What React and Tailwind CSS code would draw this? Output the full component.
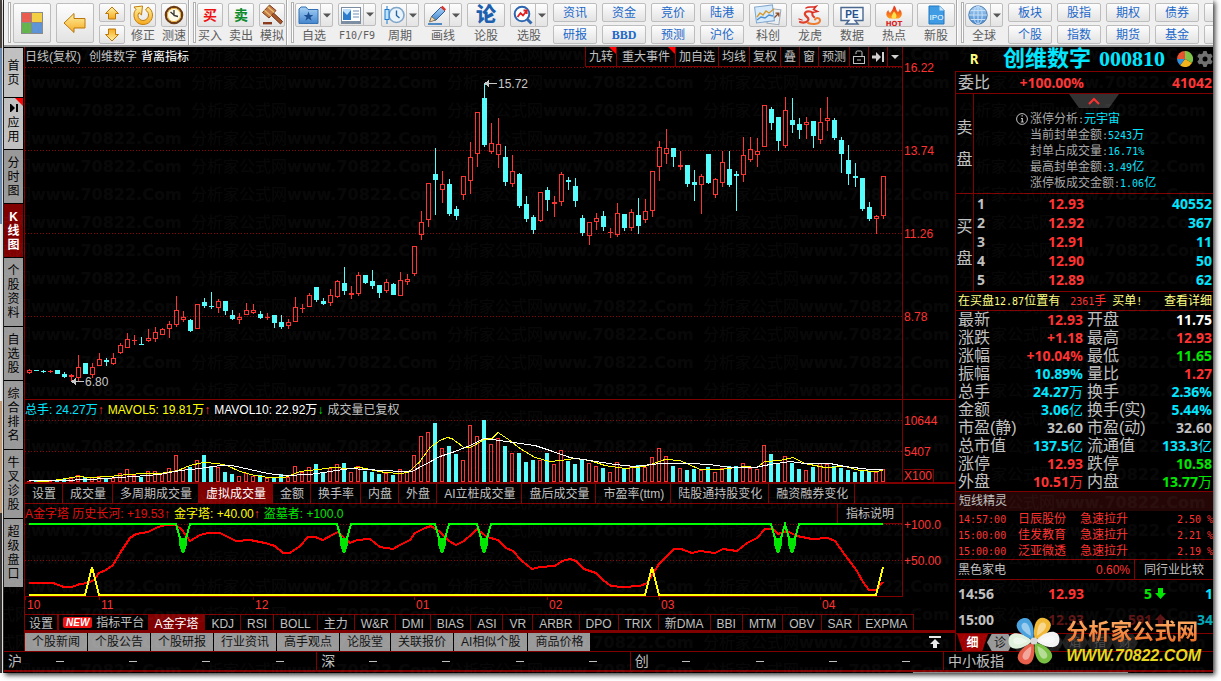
import React, { useState } from "react";
import clsx from "clsx";
import { FaGear } from "react-icons/fa6";

// [up, high, bodyTop, bodyBottom, low, volume]
const CANDLES = [
  [1, 369, 370, 373, 374, 1], [0, 370, 370, 371, 371, 1], [0, 370, 371, 372, 373, 2], [1, 370, 371, 372, 373, 1],
  [0, 370, 370, 374, 374, 1], [0, 372, 374, 377, 378, 3], [1, 374, 375, 377, 382, 4], [1, 355, 367, 378, 381, 7],
  [0, 363, 363, 374, 374, 5], [1, 363, 367, 375, 378, 5], [1, 353, 359, 366, 366, 6], [0, 358, 360, 362, 366, 3],
  [1, 353, 358, 364, 365, 4], [1, 343, 345, 353, 354, 9], [1, 333, 339, 348, 348, 13], [1, 335, 340, 341, 345, 7],
  [0, 337, 344, 345, 345, 5], [1, 329, 338, 341, 342, 11], [1, 327, 332, 339, 342, 11], [1, 328, 329, 335, 335, 9],
  [1, 321, 324, 329, 338, 14], [1, 296, 310, 325, 327, 27], [1, 311, 317, 320, 322, 14], [0, 319, 320, 331, 332, 15],
  [1, 304, 304, 329, 329, 22], [0, 298, 302, 306, 308, 27], [0, 292, 306, 307, 309, 16], [1, 299, 301, 308, 313, 15],
  [0, 301, 301, 311, 315, 10], [0, 310, 315, 319, 320, 8], [1, 313, 317, 320, 324, 6], [1, 303, 310, 315, 315, 9],
  [1, 304, 310, 313, 314, 6], [0, 311, 314, 318, 319, 7], [1, 313, 317, 318, 320, 4], [0, 315, 315, 323, 328, 5],
  [0, 315, 322, 327, 329, 8], [1, 319, 322, 326, 329, 5], [1, 297, 307, 322, 322, 16], [1, 304, 308, 309, 313, 10],
  [1, 293, 295, 307, 307, 15], [0, 287, 287, 300, 302, 18], [0, 298, 301, 304, 305, 10], [1, 289, 295, 303, 306, 14],
  [1, 280, 281, 297, 298, 18], [0, 267, 283, 291, 295, 19], [1, 286, 293, 295, 299, 10], [1, 272, 275, 294, 296, 16],
  [0, 275, 275, 283, 284, 11], [0, 270, 281, 286, 289, 10], [0, 285, 285, 293, 298, 8], [1, 279, 282, 291, 293, 9],
  [0, 283, 284, 295, 295, 7], [1, 272, 280, 296, 296, 13], [1, 274, 279, 282, 285, 10], [1, 246, 246, 274, 276, 27],
  [1, 211, 222, 235, 240, 46], [1, 183, 183, 220, 227, 50], [0, 148, 174, 180, 215, 59], [1, 171, 184, 190, 203, 34],
  [0, 179, 184, 214, 216, 36], [0, 206, 209, 216, 220, 28], [1, 176, 176, 195, 200, 22], [1, 142, 157, 181, 194, 57],
  [1, 112, 112, 154, 167, 46], [0, 83, 98, 145, 147, 62], [1, 123, 143, 152, 154, 38], [1, 118, 144, 155, 168, 44],
  [0, 146, 157, 182, 186, 36], [1, 155, 171, 184, 187, 29], [0, 173, 174, 206, 208, 29], [0, 196, 204, 219, 222, 20],
  [0, 215, 217, 230, 234, 22], [1, 192, 192, 221, 222, 22], [0, 187, 190, 200, 211, 29], [1, 196, 202, 204, 217, 18],
  [1, 172, 174, 202, 206, 32], [0, 177, 180, 182, 190, 21], [0, 178, 186, 201, 207, 18], [0, 215, 218, 233, 236, 23],
  [1, 222, 222, 236, 245, 19], [1, 213, 218, 222, 230, 16], [0, 211, 216, 227, 231, 14], [1, 228, 232, 233, 238, 10],
  [1, 203, 213, 235, 237, 20], [0, 214, 214, 228, 231, 13], [1, 209, 212, 228, 231, 16], [0, 198, 215, 226, 234, 17],
  [1, 199, 211, 220, 223, 15], [1, 171, 171, 211, 217, 25], [1, 141, 147, 167, 181, 34], [1, 129, 148, 154, 164, 26],
  [0, 148, 148, 157, 167, 16], [1, 151, 165, 167, 170, 14], [0, 165, 165, 184, 187, 12], [0, 170, 182, 185, 201, 13],
  [1, 174, 176, 185, 214, 12], [0, 154, 154, 183, 184, 15], [1, 178, 179, 195, 198, 10], [1, 151, 162, 183, 187, 14],
  [0, 151, 169, 185, 187, 16], [0, 171, 174, 176, 211, 16], [1, 137, 155, 175, 182, 19], [1, 137, 149, 160, 162, 14],
  [1, 138, 151, 155, 167, 13], [1, 105, 105, 147, 147, 37], [0, 107, 109, 123, 130, 28], [0, 117, 117, 141, 151, 18],
  [1, 97, 110, 146, 148, 26], [0, 98, 120, 125, 133, 19], [0, 118, 124, 130, 139, 13], [1, 117, 122, 125, 139, 12],
  [0, 121, 121, 136, 148, 15], [1, 108, 122, 140, 144, 19], [1, 97, 118, 121, 131, 18], [0, 118, 120, 138, 140, 16],
  [0, 137, 140, 154, 173, 14], [0, 145, 160, 174, 185, 12], [0, 163, 176, 178, 187, 10], [0, 178, 178, 209, 211, 12],
  [0, 202, 207, 219, 221, 11], [1, 215, 216, 219, 234, 10], [1, 176, 176, 216, 219, 13],
];

const MAVOL5 =
  "29,480 45,481 60,479 78,476 90,477 110,476 127,474 145,473 160,473 178,470 190,465 203,462 218,463 227,465 240,471 255,475 268,477 285,477 300,471 318,469 333,467 348,468 360,467 370,469 385,472 400,473 408,472 420,461 430,447 440,440 447,437 452,438 460,444 464,447 470,447 474,445 484,439 492,438 498,432 510,440 520,448 535,457 550,461 560,460 575,458 590,460 605,465 625,468 645,466 665,459 680,460 700,469 720,469 745,466 757,467 765,461 780,460 793,457 805,463 825,467 845,466 860,470 875,471 883,470";
const MAVOL10 =
  "29,480 60,480 90,479 120,477 160,474 180,470 200,468 220,465 232,465 250,469 268,473 285,475 310,474 330,471 350,468 365,469 385,470 400,471 412,471 425,464 440,456 455,451 470,445 484,438 500,440 520,443 535,445 550,450 570,457 590,460 615,464 635,466 660,463 690,463 710,464 730,467 755,467 770,464 790,461 805,463 830,463 845,466 870,469 883,469";
const HISTORY =
  "29,583 53,583 64,587 72,587 80,584 88,583 94,580 99,573 106,570 113,565 120,553 130,538 136,534 148,532 158,527 166,525 176,525 182,530 190,541 200,535 208,533 220,533 236,541 250,540 265,543 275,546 283,553 290,553 300,546 308,537 315,537 323,540 332,535 338,532 350,543 357,540 370,539 380,547 393,549 400,545 410,540 415,533 425,528 431,526 440,532 449,541 456,545 464,541 472,534 477,529 487,537 498,540 506,548 513,551 522,561 532,569 540,567 555,566 562,561 570,559 576,561 584,569 596,573 603,580 611,586 623,587 640,586 647,583 652,575 659,564 668,555 674,549 681,549 692,553 700,551 715,553 723,549 737,551 747,543 757,538 765,529 773,529 778,534 787,531 797,536 812,539 828,538 835,541 845,555 857,571 863,582 869,590 876,590 883,582";
const SIGNALS = [183, 344, 442, 484, 778, 792];

const SIDE_TABS = [
  { text: "首页", box: "h-[49px] bg-[#c0c0c0]" },
  { text: "应用", box: "h-[51px] bg-[#c0c0c0]", flag: true },
  { text: "分时图", box: "h-[53px] bg-[#999]" },
  { text: "K线图", box: "h-[53px] bg-[#800000] text-white", bold: true },
  { text: "个股资料", box: "h-[68px] bg-[#999]" },
  { text: "自选股", box: "h-[53px] bg-[#999]" },
  { text: "综合排名", box: "h-[68px] bg-[#999]" },
  { text: "牛叉诊股", box: "h-[68px] bg-[#999]" },
  { text: "超级盘口", box: "h-[68px] bg-[#999]" },
];

const VOLUME_TABS = ["设置", "成交量", "多周期成交量", "虚拟成交量", "金额", "换手率", "内盘", "外盘", "AI立桩成交量", "盘后成交量", "市盈率(ttm)", "陆股通持股变化", "融资融券变化"];
const INDICATORS = ["A金字塔", "KDJ", "RSI", "BOLL", "主力", "W&R", "DMI", "BIAS", "ASI", "VR", "ARBR", "DPO", "TRIX", "新DMA", "BBI", "MTM", "OBV", "SAR", "EXPMA"];
const NEWS_TABS = ["个股新闻", "个股公告", "个股研报", "行业资讯", "高手观点", "论股堂", "关联报价", "AI相似个股", "商品价格"];
const MONTHS = ["10", "11", "12", "01", "02", "03", "04"];

const RED = "text-[#ff3232]";
const CYAN = "text-[#00e6ff]";
const GREEN = "text-[#00e600]";
const GRAY = "text-[#c0c0c0]";

const BIDS = [
  ["1", "12.93", "40552"],
  ["2", "12.92", "367"],
  ["3", "12.91", "11"],
  ["4", "12.90", "50"],
  ["5", "12.89", "62"],
];

const LIMIT_INFO = [
  ["涨停分析", "", "元宇宙"],
  ["当前封单金额", "5243", "万"],
  ["封单占成交量", "16.71%", ""],
  ["最高封单金额", "3.49", "亿"],
  ["涨停板成交金额", "1.06", "亿"],
];

const QUOTE = [
  ["最新", "12.93", RED, "开盘", "11.75", "text-white"],
  ["涨跌", "+1.18", RED, "最高", "12.93", RED],
  ["涨幅", "+10.04%", RED, "最低", "11.65", GREEN],
  ["振幅", "10.89%", CYAN, "量比", "1.27", RED],
  ["总手", "24.27万", CYAN, "换手", "2.36%", CYAN],
  ["金额", "3.06亿", CYAN, "换手(实)", "5.44%", CYAN],
  ["市盈(静)", "32.60", GRAY, "市盈(动)", "32.60", GRAY],
  ["总市值", "137.5亿", CYAN, "流通值", "133.3亿", CYAN],
  ["涨停", "12.93", RED, "跌停", "10.58", GREEN],
  ["外盘", "10.51万", RED, "内盘", "13.77万", GREEN],
];

const ALERTS = [
  ["14:57:00", "日辰股份", "急速拉升", "2.50"],
  ["15:00:00", "佳发教育", "急速拉升", "2.21"],
  ["15:00:00", "泛亚微透", "急速拉升", "2.19"],
];

/* ---------- toolbar icons ---------- */

const IconDefs = () => (
  <svg className="absolute size-0" aria-hidden="true">
    <defs>
      <linearGradient id="gold" x1="0" y1="0" x2="0" y2="1">
        <stop offset="0" stopColor="#fff3a8" />
        <stop offset="1" stopColor="#f5a81c" />
      </linearGradient>
      <linearGradient id="blue" x1="0" y1="0" x2="0" y2="1">
        <stop offset="0" stopColor="#a9d3f7" />
        <stop offset="1" stopColor="#4385cc" />
      </linearGradient>
      <linearGradient id="fire" x1="0" y1="0" x2="0" y2="1">
        <stop offset="0" stopColor="#e5261b" />
        <stop offset="1" stopColor="#ff9c1a" />
      </linearGradient>
    </defs>
  </svg>
);

const HomeIcon = () => (
  <svg width="22" height="22" viewBox="0 0 22 22" stroke="#8a8a8a" strokeWidth="1">
    <rect x="0.5" y="0.5" width="10" height="10" fill="#ea5b50" />
    <rect x="10.5" y="0.5" width="11" height="10" fill="#f3cf45" />
    <rect x="0.5" y="10.5" width="10" height="11" fill="#63b34c" />
    <rect x="10.5" y="10.5" width="11" height="11" fill="#5b93d6" />
  </svg>
);

const BackIcon = () => (
  <svg width="24" height="22" viewBox="0 0 24 22">
    <path d="M1 11 L11 1.5 V6.5 H22 V16 H11 V20.5 Z" fill="url(#gold)" stroke="#b9770b" />
  </svg>
);

const VerticalArrow = ({ down }) => (
  <svg width="16" height="14" viewBox="0 0 16 14" className={clsx(down && "rotate-180")}>
    <path d="M8 1 L14.5 7.5 H11.5 V13 H4.5 V7.5 H1.5 Z" fill="url(#gold)" stroke="#b9770b" />
  </svg>
);

const RefreshIcon = () => (
  <svg width="22" height="22" viewBox="0 0 22 22">
    <path
      d="M2 10 C1.5 16.5 6 20.5 11 20.5 C17 20.5 20.5 16 20.5 11 C20.5 7.5 18.5 4.5 16 3 L13.5 6 C15.5 7.3 16.5 9 16.5 11 C16.5 14 14 16.5 11 16.5 C8.3 16.5 6 14.5 6 11.5 C6 10.5 6.4 9.5 7 8.7 L9.5 11 L10.5 2 L2 3 L4 5.5 C2.8 6.8 2.1 8.4 2 10 Z"
      fill="url(#gold)"
      stroke="#c07d0c"
      strokeLinejoin="round"
    />
  </svg>
);

const SpeedIcon = () => (
  <svg width="20" height="20" viewBox="0 0 20 20">
    <circle cx="10" cy="10" r="8.2" fill="#fff9e8" stroke="#6b3a12" strokeWidth="2.2" />
    <circle cx="10" cy="10" r="6.6" fill="none" stroke="#e8b13c" />
    <path d="M10 5 V10.5 L14 11.5 M10 10 L6.5 7" fill="none" stroke="#333" strokeWidth="1.3" />
  </svg>
);

const GavelIcon = () => (
  <svg width="23" height="22" viewBox="0 0 23 22">
    <path d="M9.5 10.5 L12 8.5 L21.5 17.5 L19.5 20 Z" fill="#a8562b" stroke="#6d3010" />
    <path d="M1.5 8.5 L8.5 1 L15 6.5 L8 14 Z" fill="#c57a4c" stroke="#7a3b18" />
    <path d="M3.5 6.3 L10 12 M6.7 2.8 L13.2 8.6" stroke="#e8c06c" strokeWidth="1.3" />
    <rect x="2" y="18" width="9" height="2.4" fill="#8a3a1c" />
  </svg>
);

const FolderIcon = () => (
  <svg width="21" height="19" viewBox="0 0 21 19">
    <path d="M1 3 L3 1 H8 L10 3.5 H20 V17.5 H1 Z" fill="url(#blue)" stroke="#3370b3" />
    <path d="M10.5 5.5 L11.8 9 H15.3 L12.5 11.2 L13.6 14.7 L10.5 12.6 L7.4 14.7 L8.5 11.2 L5.7 9 H9.2 Z" fill="#1d4f93" />
  </svg>
);

const ReportIcon = () => (
  <svg width="21" height="18" viewBox="0 0 21 18">
    <rect x="0.5" y="1.5" width="19" height="14" fill="#fff" stroke="#7b8ba0" />
    <rect x="2" y="3" width="8" height="11" fill="#2b7ccc" />
    <path d="M2 5 L6 9 L10 4 V3 H2 Z" fill="#bde0ff" />
    <path d="M12 5 H18 M12 8 H18 M12 11 H18" stroke="#6c8fb8" />
    <path d="M0 17 H20" stroke="#7b8ba0" strokeWidth="2" />
  </svg>
);

const PeriodIcon = () => (
  <svg width="21" height="20" viewBox="0 0 21 20">
    <circle cx="12.5" cy="10" r="7.5" fill="#e8f3fc" stroke="#7fa5c9" strokeWidth="1.6" />
    <path d="M12.5 5.5 V10.5 L15.5 13" fill="none" stroke="#2565a5" strokeWidth="1.4" />
    <path d="M3 1 V19" stroke="#1f7bd0" />
    <rect x="1" y="4.5" width="4" height="10" fill="#bfe3ff" stroke="#1f7bd0" />
  </svg>
);

const PencilIcon = () => (
  <svg width="21" height="20" viewBox="0 0 21 20">
    <path d="M3 16 L5 11 L14 2 L18 6 L9 15 Z" fill="url(#blue)" stroke="#29619e" />
    <path d="M13.5 2.5 L15.5 0.8 L19 4.2 L17.5 6 Z" fill="#d9342b" />
    <path d="M2.5 17 L4.5 11.5 L8.5 15 Z" fill="#f3d9ae" stroke="#6d5a38" strokeWidth="0.7" />
    <path d="M1 19 H15" stroke="#1e6bb8" strokeWidth="1.4" />
  </svg>
);

const PickIcon = () => (
  <svg width="20" height="20" viewBox="0 0 20 20">
    <circle cx="9" cy="9" r="7.3" fill="#fff" stroke="#2c64ae" strokeWidth="2" />
    <path d="M14.5 14.5 L18.5 18.5" stroke="#2c64ae" strokeWidth="3" />
    <path d="M4.5 12 L7.5 8 L10 10.5 L13.5 6 M10.5 5.5 H13.7 V9" fill="none" stroke="#e02020" strokeWidth="1.8" />
  </svg>
);

const StarBoardIcon = () => (
  <svg width="28" height="22" viewBox="0 0 28 22">
    <rect x="14" y="5" width="12" height="15" fill="#eceff2" stroke="#9aa7b4" transform="rotate(8 20 12)" />
    <path d="M20 14 L24.5 9.5 M21.5 9.2 H24.8 V12.5" fill="none" stroke="#8a4a26" strokeWidth="1.3" />
    <rect x="1.5" y="2" width="18" height="16" fill="#d7eafb" stroke="#7fa6cc" transform="rotate(-7 10 10)" />
    <path d="M3 13 L6 9 L9 11 L12 7 L15 9 L20 5" fill="none" stroke="#d59a2b" strokeWidth="1.3" />
    <path d="M3 16 L7 13 L11 14 L15 11 L19 12" fill="none" stroke="#4b8fd0" strokeWidth="1.3" />
  </svg>
);

const DragonIcon = () => (
  <svg width="26" height="21" viewBox="0 0 26 21" fill="none" strokeLinecap="round">
    <path d="M3 17 C9 19 14 15 10 12 C6 9 8 5.5 13 6.5 C18 7.5 13 10 17 12" stroke="#e0402b" strokeWidth="2.2" />
    <path d="M11 18 C16 20 23 19 23 15.5 C23 12.5 19 12.5 18 14.5" stroke="#ee7a2e" strokeWidth="2" />
    <path d="M9 3 C12 1 15 3 19 1.5 L16.5 4.5 L20.5 6.5 L15.5 7.5" stroke="#d92a20" strokeWidth="1.5" />
    <path d="M2 14 L5 15" stroke="#d92a20" strokeWidth="1.3" />
  </svg>
);

const PeIcon = () => (
  <svg width="24" height="19" viewBox="0 0 24 19">
    <path d="M1 1.5 H23 V14.5 H15 L18 18 H6 L9 14.5 H1 Z" fill="#f6f9fd" stroke="#4a678f" strokeWidth="1.4" />
    <text x="12" y="12" textAnchor="middle" fontSize="10" fontWeight="700" fontFamily="Liberation Sans, sans-serif" fill="#24518c">PE</text>
  </svg>
);

const HotIcon = () => (
  <svg width="20" height="21" viewBox="0 0 20 21">
    <path d="M10 0.5 C13 3 11.5 5 14 7 C15.5 6 15.5 5 15.3 4 C19 7 18.5 12 14.5 13.5 H5.5 C1.5 12 1.5 7 4.5 5 C4.5 6.5 5 7.5 6.2 7.8 C8.5 5 9 3.5 10 0.5 Z" fill="url(#fire)" />
    <path d="M10 6.5 C12 8.5 13.5 11 11.5 13.5 H8.5 C6.5 11.5 8.5 9.5 10 6.5 Z" fill="#ffe14d" />
    <text x="10" y="20.5" textAnchor="middle" fontSize="7" fontWeight="900" fontFamily="DejaVu Sans, sans-serif" fill="#d81818">HOT</text>
  </svg>
);

const IpoIcon = () => (
  <svg width="17" height="20" viewBox="0 0 17 20">
    <path d="M1 1 H11.5 L16 5.5 V19 H1 Z" fill="#3f9ce4" stroke="#2277bd" />
    <path d="M11.5 1 V5.5 H16 Z" fill="#cbe6fb" />
    <text x="8.5" y="14.5" textAnchor="middle" fontSize="8" fontFamily="Liberation Sans, sans-serif" fill="#fff">IPO</text>
  </svg>
);

const GlobeIcon = () => (
  <svg width="20" height="20" viewBox="0 0 20 20" fill="none" stroke="#c9dff4">
    <circle cx="10" cy="10" r="9.2" fill="url(#blue)" stroke="#4678ae" />
    <ellipse cx="10" cy="10" rx="4.2" ry="9" />
    <path d="M1 10 H19 M2.7 5.5 H17.3 M2.7 14.5 H17.3 M10 1 V19" />
  </svg>
);

/* ---------- toolbar ---------- */

const FACE = "rounded-xs border border-[#bdbdbd] bg-linear-to-b from-[#fdfdfd] to-[#e3e3e3]";

const Caret = () => (
  <svg width="8" height="5" viewBox="0 0 8 5" fill="#555">
    <path d="M0 0.5 H8 L4 4.5 Z" />
  </svg>
);

const Tool = ({ label, icon, drop, narrow }) => (
  <button className={clsx("flex shrink-0 flex-col items-center", narrow ? "w-[26px]" : "w-[38px]")}>
    <span className={clsx("flex h-[25px] w-full items-center overflow-hidden", FACE)}>
      <span className="flex flex-1 items-center justify-center">{icon}</span>
      {drop && (
        <span className="flex h-full w-3 items-center justify-center border-l border-[#bdbdbd]">
          <Caret />
        </span>
      )}
    </span>
    <span className="text-[12px] leading-[18px] whitespace-nowrap text-[#5c5c5c]">{label}</span>
  </button>
);

const TextPair = ({ pair }) => (
  <div className="flex w-[44px] shrink-0 flex-col gap-[3px]">
    {pair.map((t, i) => (
      <button
        key={i}
        aria-label={t || "更多"}
        className={clsx("flex h-[19px] items-center justify-center text-[12px] text-[#1c68c8]", FACE, t === "BBD" && "font-['Liberation_Serif',serif] font-bold")}
      >
        {t}
      </button>
    ))}
  </div>
);

const Handle = () => (
  <div className="flex w-[10px] shrink-0 gap-[3px] self-stretch pl-px">
    <span className="w-[2px] border-r border-white bg-[#a8a8a8]" />
    <span className="my-[2px] w-[3px] border border-[#b0b0b0] bg-white" />
  </div>
);

const Toolbar = () => (
  <div className="flex h-[47px] shrink-0 overflow-hidden border-b-2 border-[#9a9a9a] bg-[#efefef] pl-[4px]">
    <div className="flex w-[5px] shrink-0 self-stretch">
      <span className="my-[2px] w-[3px] border border-[#b0b0b0] bg-white" />
    </div>
    <div className="flex gap-[5px] pt-[3px]">
      <button aria-label="主页" className={clsx("flex h-[40px] w-[38px] items-center justify-center", FACE)}>
        <HomeIcon />
      </button>
      <button aria-label="返回" className={clsx("flex h-[40px] w-[38px] items-center justify-center", FACE)}>
        <BackIcon />
      </button>
      <div className="flex w-[26px] flex-col gap-[3px]">
        <button aria-label="上翻" className={clsx("flex h-[19px] items-center justify-center", FACE)}>
          <VerticalArrow />
        </button>
        <button aria-label="下翻" className={clsx("flex h-[19px] items-center justify-center", FACE)}>
          <VerticalArrow down />
        </button>
      </div>
      <Tool narrow label="修正" icon={<RefreshIcon />} />
      <Tool narrow label="测速" icon={<SpeedIcon />} />
    </div>
    <Handle />
    <div className="flex gap-[5px] pt-[3px]">
      <Tool narrow label="买入" icon={<span className="text-[14px] leading-none font-bold text-[#ee1111]">买</span>} />
      <Tool narrow label="卖出" icon={<span className="text-[14px] leading-none font-bold text-[#0a8a2a]">卖</span>} />
      <Tool narrow label="模拟" icon={<GavelIcon />} />
    </div>
    <Handle />
    <div className="flex gap-[5px] pt-[3px]">
      <Tool drop label="自选" icon={<FolderIcon />} />
      <Tool drop label={<span className="font-['DejaVu_Sans_Mono',monospace] text-[10px]">F10/F9</span>} icon={<ReportIcon />} />
      <Tool drop label="周期" icon={<PeriodIcon />} />
      <Tool drop label="画线" icon={<PencilIcon />} />
      <Tool label="论股" icon={<span className="text-[20px] leading-none font-black text-[#1c5fae]">论</span>} />
      <Tool drop label="选股" icon={<PickIcon />} />
      <TextPair pair={["资讯", "研报"]} />
      <TextPair pair={["资金", "BBD"]} />
      <TextPair pair={["竞价", "预测"]} />
      <TextPair pair={["陆港", "沪伦"]} />
    </div>
    <div className="flex gap-1 pt-[3px] pl-[5px]">
      <Tool label="科创" icon={<StarBoardIcon />} />
      <Tool label="龙虎" icon={<DragonIcon />} />
      <Tool label="数据" icon={<PeIcon />} />
      <Tool label="热点" icon={<HotIcon />} />
      <Tool label="新股" icon={<IpoIcon />} />
    </div>
    <Handle />
    <div className="flex gap-[5px] pt-[3px]">
      <Tool drop label="全球" icon={<GlobeIcon />} />
      <TextPair pair={["板块", "个股"]} />
      <TextPair pair={["股指", "指数"]} />
      <TextPair pair={["期权", "期货"]} />
      <TextPair pair={["债券", "基金"]} />
      <TextPair pair={["", ""]} />
    </div>
  </div>
);

/* ---------- left tabs ---------- */

const SideTabs = () => (
  <nav className="flex w-[21px] shrink-0 flex-col gap-px border-r border-[#800000] bg-black pt-px pr-px">
    {SIDE_TABS.map((tab) => (
      <button
        key={tab.text}
        className={clsx("relative flex shrink-0 flex-col items-center justify-center text-[12px] leading-[14px]", tab.box, tab.bold && "font-bold")}
      >
        {tab.flag && (
          <>
            <svg className="absolute top-0 right-0" width="8" height="8">
              <path d="M0 0 H8 V8 Z" fill="#f00" />
            </svg>
            <svg className="mb-1" width="8" height="8" viewBox="0 0 8 8">
              <path d="M0 0 H1 L5 4 L1 8 H0 Z M6 0 H8 V8 H6 Z" />
            </svg>
          </>
        )}
        {[...tab.text].map((c, i) => (
          <span key={i}>{c}</span>
        ))}
      </button>
    ))}
  </nav>
);

/* ---------- charts ---------- */

const GridLine = ({ y }) => <path d={`M25 ${y}.5 H902`} stroke="#900000" strokeDasharray="1 2" />;

const PriceChart = () => (
  <svg className="block min-h-0 w-full flex-1" viewBox="25 67 877 332" preserveAspectRatio="xMinYMin meet" shapeRendering="crispEdges">
    {[67, 150, 233, 316].map((y) => (
      <GridLine key={y} y={y} />
    ))}
    {CANDLES.map(([up, h, t, b, l], i) => {
      const x = 27 + i * 7;
      const color = up ? "#ff3232" : "#54fcfc";
      const hollow = up && b - t > 2;
      return (
        <g key={i} fill={color}>
          <rect x={x + 2} y={h} width="1" height={t - h} />
          <rect x={x + 2} y={b} width="1" height={l - b} />
          {hollow ? (
            <rect x={x + 0.5} y={t + 0.5} width="4" height={b - t - 1} fill="none" stroke={color} />
          ) : (
            <rect x={x} y={t} width="5" height={b - t} />
          )}
        </g>
      );
    })}
    <g fill="#c8c8c8" stroke="none" fontFamily="Liberation Sans, sans-serif" fontSize="12">
      <path d="M484 83.5 L489 80 V83 H497 V84 H489 V87 Z" />
      <text x="498" y="88">15.72</text>
      <path d="M71 381.5 L76 378 V381 H84 V382 H76 V385 Z" />
      <text x="85" y="386">6.80</text>
    </g>
  </svg>
);

const VolumeChart = () => (
  <svg className="block h-[62px] w-full overflow-visible" viewBox="25 420 877 62" preserveAspectRatio="xMinYMin meet" shapeRendering="crispEdges">
    <GridLine y={420} />
    <GridLine y={451} />
    {CANDLES.map(([up, , , , , v], i) => {
      const x = 27 + i * 7;
      return up && v > 2 ? (
        <rect key={i} x={x + 0.5} y={482.5 - v} width="3" height={v - 1} fill="none" stroke="#ff3232" />
      ) : (
        <rect key={i} x={x} y={482 - v} width="4" height={v} fill={up ? "#ff3232" : "#54fcfc"} />
      );
    })}
    <g fill="none" transform="translate(0 0.5)">
      <polyline points={MAVOL5} stroke="#ffff00" />
      <polyline points={MAVOL10} stroke="#ffffff" />
    </g>
  </svg>
);

const PyramidChart = () => (
  <svg className="block h-[72px] w-full overflow-visible" viewBox="25 524 877 72" preserveAspectRatio="xMinYMin meet" shapeRendering="crispEdges">
    <GridLine y={524} />
    <GridLine y={560} />
    <g fill="none" strokeWidth="2">
      <polyline points={HISTORY} stroke="#ff0000" />
      <polyline points={`29,524 ${SIGNALS.map((x) => `${x - 7},524 ${x},549 ${x + 7},524`).join(" ")} 883,524`} stroke="#00ff00" />
      <polyline points="29,595 85,595 92,567 99,595 645,595 652,567 659,595 876,595 883,567" stroke="#ffff00" />
    </g>
    {SIGNALS.map((x) => (
      <path key={x} d={`M${x - 2} 538 H${x + 2} V540 H${x + 4} V545 L${x + 1} 553 H${x - 1} L${x - 4} 545 V540 H${x - 2} Z`} fill="#00e600" />
    ))}
  </svg>
);

const Axis = ({ children, className }) => (
  <div className={clsx("flex w-[53px] shrink-0 flex-col border-l border-[#800000] pl-px text-[12px] leading-4 text-[#ff3232]", className)}>{children}</div>
);

const ChartTool = ({ children, flag, label }) => (
  <button aria-label={label} className="relative flex items-center border-l border-[#800000] px-[3px]">
    {flag && (
      <svg className="absolute top-0 right-0" width="7" height="7">
        <path d="M0 0 H7 V7 Z" fill="#f00" />
      </svg>
    )}
    {children}
  </button>
);

const Tabs = ({ items, active, onPick, pad }) =>
  items.map((t) => (
    <button
      key={t}
      onClick={() => onPick(t)}
      className={clsx("shrink-0 border-r border-[#800000] whitespace-nowrap", pad, t === active ? "bg-[#800000] text-white" : "text-[#c0c0c0]")}
    >
      {t}
    </button>
  ));

const ChartPanel = () => {
  const [volumeTab, setVolumeTab] = useState("虚拟成交量");
  const [indicator, setIndicator] = useState("A金字塔");

  return (
    <main className="flex min-w-0 flex-1 flex-col text-[12px]">
      {/* K line */}
      <section className="flex min-h-0 flex-1 border-b border-[#800000]">
        <div className="flex min-w-0 flex-1 flex-col">
          <div className="flex h-5 shrink-0 justify-between text-[#c0c0c0]">
            <h2 className="flex gap-2 leading-5">
              <span>日线(复权)</span>
              <span>创维数字</span>
              <span className="-ml-1 text-white">背离指标</span>
            </h2>
            <div className="flex border-b border-[#800000]">
              <ChartTool flag>九转</ChartTool>
              <ChartTool flag>
                <span className="px-[2px]">重大事件</span>
              </ChartTool>
              <ChartTool>加自选</ChartTool>
              <ChartTool>均线</ChartTool>
              <ChartTool>复权</ChartTool>
              <ChartTool>叠</ChartTool>
              <ChartTool>窗</ChartTool>
              <ChartTool>预测</ChartTool>
              <ChartTool label="锁定">
                <svg width="12" height="14" viewBox="0 0 12 14" fill="none" stroke="#c0c0c0">
                  <rect x="0.5" y="6.5" width="11" height="7" />
                  <path d="M3 4 V2.5 Q3 1 4.5 1 H7.5 Q9 1 9 2.5 V6.5 M4 10 H8" />
                </svg>
              </ChartTool>
              <ChartTool label="右移">
                <svg width="12" height="10" viewBox="0 0 12 10" fill="#d0d0d0">
                  <path d="M0 3.5 H4 V0 L9 5 L4 10 V6.5 H0 Z M10 0 H12 V10 H10 Z" />
                </svg>
              </ChartTool>
              <ChartTool label="展开">
                <svg width="8" height="4" viewBox="0 0 8 4" fill="#d0d0d0">
                  <path d="M0 0 H8 L4 4 Z" />
                </svg>
              </ChartTool>
            </div>
          </div>
          <PriceChart />
        </div>
        <Axis className="pt-[13px]">
          {["16.22", "13.74", "11.26", "8.78"].map((v) => (
            <span key={v} className="h-[83px] shrink-0">
              {v}
            </span>
          ))}
        </Axis>
      </section>

      {/* volume */}
      <section className="flex shrink-0 border-b-2 border-[#800000]">
        <div className="min-w-0 flex-1">
          <div className="flex h-5 gap-1 leading-5 whitespace-nowrap">
            <span className="text-[#00e6ff]">
              总手: 24.27万<b className={clsx(RED, "font-normal")}>↑</b>
            </span>
            <span className="text-[#ffff00]">
              MAVOL5: 19.81万<b className={clsx(RED, "font-normal")}>↑</b>
            </span>
            <span className="text-white">
              MAVOL10: 22.92万<b className={clsx(GREEN, "font-normal")}>↓</b>
            </span>
            <span className="text-[#c0c0c0]">成交量已复权</span>
          </div>
          <VolumeChart />
        </div>
        <Axis className="pt-[13px]">
          <span className="h-[31px]">10644</span>
          <span className="h-[25px]">5407</span>
          <span className="h-[13px] w-[30px] border-t border-r border-[#800000] leading-[13px]">X100</span>
        </Axis>
      </section>
      <div className="flex h-[20px] shrink-0 border-b border-[#800000]">
        <Tabs items={VOLUME_TABS} active={volumeTab} onPick={setVolumeTab} pad="pr-1.5 pl-[7px]" />
      </div>

      {/* indicator */}
      <section className="flex shrink-0">
        <div className="min-w-0 flex-1 border-b border-[#800000]">
          <div className="flex h-[20px] justify-between whitespace-nowrap">
            <div className="flex gap-1 leading-5">
              <span className="text-[#e01010]">
                A金字塔 历史长河: +19.53<b className="font-normal">↑</b>
              </span>
              <span className="text-[#ffff00]">
                金字塔: +40.00<b className={clsx(RED, "font-normal")}>↑</b>
              </span>
              <span className="text-[#00e600]">盗墓者: +100.0</span>
            </div>
            <button className="border-b border-l border-[#800000] px-2 text-[#c0c0c0]">指标说明</button>
          </div>
          <PyramidChart />
        </div>
        <Axis className="pt-[13px]">
          <span className="h-[36px]">+100.0</span>
          <span className="h-[36px]">+50.00</span>
        </Axis>
      </section>
      <div className="grid h-[17px] shrink-0 grid-cols-[74fr_154fr_161fr_133fr_112fr_161fr_135fr] leading-4 text-[#ff3232]">
        {MONTHS.map((m) => (
          <span key={m} className="flex gap-px">
            <i className="h-[3px] w-px bg-[#800000]" />
            {m}
          </span>
        ))}
      </div>
      <div className="flex h-[19px] shrink-0 border-b-3 border-[#800000]">
        <div className="flex border-t border-[#800000]">
          <button className="border-r-2 border-[#800000] px-1 text-[#c0c0c0]">设置</button>
          <button className="flex items-center gap-1 px-1 whitespace-nowrap text-[#c0c0c0]">
            <span className="rounded-xs bg-[#ee1111] px-[3px] text-[10px] leading-[11px] font-bold text-white italic">NEW</span>
            指标平台
          </button>
          <Tabs items={INDICATORS} active={indicator} onPick={setIndicator} pad="px-1.5" />
        </div>
      </div>
      <div className="flex h-[18px] shrink-0 items-stretch gap-px">
        {NEWS_TABS.map((t) => (
          <button key={t} className="bg-[#999] px-[7px] whitespace-nowrap text-[#111]">
            {t}
          </button>
        ))}
        <button aria-label="置顶" className="mr-[14px] ml-auto">
          <svg width="12" height="12" viewBox="0 0 12 12" fill="#e8e8e8">
            <path d="M0 0 H12 V2 H0 Z M6 3 L11 8 H8 V12 H4 V8 H1 Z" />
          </svg>
        </button>
      </div>
    </main>
  );
};

/* ---------- quote panel ---------- */

const BOLD = "font-['Noto_Sans','Noto_Sans_CJK_SC',sans-serif] text-[14px] font-bold";
const Mono = ({ children }) => <span className="font-['DejaVu_Sans_Mono',monospace] text-[10px]">{children}</span>;

const Value = ({ text, className }) => {
  const unit = /[万亿]$/.test(text) ? text.slice(-1) : "";
  return (
    <span className={clsx(BOLD, className)}>
      {unit ? text.slice(0, -1) : text}
      {unit && <span className="font-normal">{unit}</span>}
    </span>
  );
};

const Side = ({ chars }) => (
  <div className="flex w-[18px] shrink-0 flex-col items-center justify-center gap-4 border-r border-[#800000] text-[16px] leading-4 text-[#c0c0c0]">
    {[...chars].map((c) => (
      <span key={c}>{c}</span>
    ))}
  </div>
);

const DetailTabs = () => (
  <div className="relative flex h-[18px] overflow-hidden border-t border-[#800000] pl-px text-[12px] leading-4">
    {["细", "诊", "分", "异", "焰", "指", "财"].map((t, i) => (
      <button
        key={t}
        className={clsx(
          "h-[17px] shrink-0",
          i === 0 ? "w-[31px] bg-[#a00000] font-bold text-white [clip-path:polygon(0_0,100%_0,82%_100%,18%_100%)]" : "-ml-px w-[26px] [clip-path:polygon(18%_0,82%_0,100%_50%,82%_100%,18%_100%,0_50%)]",
          i === 1 && "bg-[#999] text-[#111]",
          i > 1 && "bg-[#1c1c1c] text-[#4a4a4a]"
        )}
      >
        {t}
      </button>
    ))}
  </div>
);

const QuotePanel = () => (
  <aside className="flex w-[258px] shrink-0 flex-col overflow-hidden text-[12px]">
    <div className="flex h-[24px] shrink-0 items-center pl-[15px]">
      <span className="w-[33px] font-['DejaVu_Sans_Mono',monospace] text-[14px] font-bold text-[#ffff80]">R</span>
      <h1 className="flex gap-2 text-[22px] leading-6 font-bold whitespace-nowrap text-[#00e6ff]">
        <span>创维数字</span>
        <span className="font-['Liberation_Serif',serif]">000810</span>
      </h1>
      <svg className="mr-1 ml-auto" width="16" height="16" viewBox="0 0 16 16">
        <path d="M8 8 V0 A8 8 0 0 1 15 12 Z" fill="#7cc243" />
        <path d="M8 8 L15 12 A8 8 0 0 1 3 14.2 Z" fill="#f2b51d" />
        <path d="M8 8 L3 14.2 A8 8 0 0 1 0 8 Z" fill="#2f8fd8" />
        <path d="M8 8 H0 A8 8 0 0 1 8 0 Z" fill="#e6502c" />
      </svg>
      <FaGear className="text-[16px] text-[#707070]" />
    </div>

    <div className="flex min-h-0 flex-1 flex-col border-t border-l border-[#800000]">
      <div className="flex h-[22px] shrink-0 items-center border-b border-[#800000] pr-px">
        <span className="w-[45px] pl-[2px] text-[16px] text-[#c0c0c0]">委比</span>
        <Value text="+100.00%" className="w-[83px] text-right text-[#ff3232]" />
        <Value text="41042" className="flex-1 text-right text-[#ff3232]" />
      </div>

      <div className="flex h-[100px] shrink-0 border-b border-[#800000]">
        <Side chars="卖盘" />
        <div className="flex-1">
          <button aria-label="收起" className="mx-auto block">
            <svg width="50" height="14" viewBox="0 0 50 14">
              <path d="M0 0 H50 L40 14 H10 Z" fill="#333" />
              <path d="M20 10 L25 5 L30 10" fill="none" stroke="#ff3232" strokeWidth="2" />
            </svg>
          </button>
          <ul className="mt-[3px] pl-[56px] text-[#a8a8a8]">
            {LIMIT_INFO.map(([label, num, tail], i) => (
              <li key={label} className="flex h-4 items-center whitespace-nowrap">
                {i === 0 && (
                  <svg className="mr-[2px] -ml-[14px]" width="12" height="12" viewBox="0 0 12 12" fill="none" stroke="#c0c0c0">
                    <circle cx="6" cy="6" r="5.4" />
                    <path d="M5 5.5 H6.3 V9 M4.8 9 H7.8 M5.5 2.9 H6.8" strokeWidth="1.2" />
                  </svg>
                )}
                <span>{label}</span>
                <Mono>:</Mono>
                <span className="text-[#00e6ff]">
                  {num && <Mono>{num}</Mono>}
                  {tail}
                </span>
              </li>
            ))}
          </ul>
        </div>
      </div>

      <div className="flex h-[97px] shrink-0">
        <Side chars="买盘" />
        <div className="flex flex-1 flex-col pb-[2px]">
          {BIDS.map(([n, price, qty]) => (
            <div key={n} className="flex min-h-0 flex-1 items-center pr-px pl-[3px]">
              <Value text={n} className="w-[10px] leading-[18px] text-[#c0c0c0]" />
              <Value text={price} className="w-[97px] text-right leading-[18px] text-[#ff3232]" />
              <Value text={qty} className="flex-1 text-right leading-[18px] text-[#00e6ff]" />
            </div>
          ))}
        </div>
      </div>

      <div className="flex h-[20px] shrink-0 items-center border-y border-[#800000] pr-px pl-[2px] whitespace-nowrap text-[#ffff80]">
        <span>
          在买盘<Mono>12.87</Mono>位置有
        </span>
        <span className="ml-[10px] text-[#ff3232]">
          <Mono>2361</Mono>手
        </span>
        <span className="ml-[6px]">
          买单<Mono>!</Mono>
        </span>
        <a href="#detail" className="ml-auto">
          查看详细
        </a>
      </div>

      <table className="w-full shrink-0 table-fixed border-collapse">
        <tbody>
          {QUOTE.map(([l1, v1, c1, l2, v2, c2]) => (
            <tr key={l1} className="h-[18px] text-[16px] leading-[18px] whitespace-nowrap text-[#c0c0c0]">
              <th className="w-[60px] p-0 pl-[2px] text-left font-normal">{l1}</th>
              <td className="w-[67px] p-0 text-right leading-[0px]">
                <Value text={v1} className={clsx("leading-[18px]", c1)} />
              </td>
              <th className="w-[64px] p-0 pl-1 text-left font-normal">{l2}</th>
              <td className="p-0 pr-px text-right leading-[0px]">
                <Value text={v2} className={clsx("leading-[18px]", c2)} />
              </td>
            </tr>
          ))}
        </tbody>
      </table>

      <h3 className="h-[20px] shrink-0 border-t border-[#800000] bg-[#240606] pl-[3px] leading-[19px] text-[#c0c0c0]">短线精灵</h3>
      <div className="shrink-0 text-[#ff3232]">
        {ALERTS.map(([time, name, note, pct]) => (
          <div key={name} className="flex h-4 items-center whitespace-nowrap">
            <span className="w-[62px] shrink-0 pl-[2px]">
              <Mono>{time}</Mono>
            </span>
            <span className="w-[62px] shrink-0">{name}</span>
            <span className="w-[97px] shrink-0">{note}</span>
            <Mono>{pct} %</Mono>
          </div>
        ))}
      </div>
      <div className="flex h-[21px] shrink-0 border-y border-[#800000] leading-[20px]">
        <span className="pl-[2px] text-[#c0c0c0]">黑色家电</span>
        <span className="ml-auto pr-1 text-[#ff3232]">0.60%</span>
        <button className="w-[79px] border-l border-[#800000] text-[#c0c0c0]">同行业比较</button>
      </div>
      <div className="flex flex-1 flex-col">
        <div className="flex flex-1 items-center">
          <Value text="14:56" className="w-[45px] pl-[2px] text-[#c0c0c0]" />
          <Value text="12.93" className="w-[83px] text-right text-[#ff3232]" />
          <Value text="5" className="w-[68px] text-right text-[#00e600]" />
          <svg className="ml-[3px]" width="11" height="11" viewBox="0 0 11 11" fill="#00e600">
            <path d="M3 0 H8 V5 H11 L5.5 11 L0 5 H3 Z" />
          </svg>
          <Value text="1" className="ml-auto text-[#00e6ff]" />
        </div>
        <div className="flex flex-1 items-center">
          <Value text="15:00" className="w-[45px] pl-[2px] text-[#c0c0c0]" />
          <Value text="12.93" className="w-[83px] text-right text-[#5a1212]" />
          <Value text="591" className="w-[68px] text-right text-[#5a1212]" />
          <svg className="ml-[3px] rotate-180" width="11" height="11" viewBox="0 0 11 11" fill="#5a1212">
            <path d="M3 0 H8 V5 H11 L5.5 11 L0 5 H3 Z" />
          </svg>
          <Value text="34" className="ml-auto text-[#00a8bb]" />
        </div>
      </div>
      <DetailTabs />
    </div>
  </aside>
);

/* ---------- status bar ---------- */

const StatusBar = () => (
  <footer className="flex h-[22px] shrink-0 flex-col text-[#c0c0c0]">
    <div className="flex flex-1 border-t border-b-2 border-[#800000]">
      {["沪", "深", "创"].map((name) => (
        <div key={name} className="flex flex-1 items-center border-r border-[#800000] pl-[4px]">
          <span className="w-[15px] text-[14px] leading-[18px]">{name}</span>
          {[0, 1, 2, 3].map((i) => (
            <span key={i} className="flex flex-1 justify-center">
              <i className="h-px w-2 bg-[#c0c0c0]" />
            </span>
          ))}
        </div>
      ))}
      <div className="w-[269px] shrink-0 pl-[4px] text-[14px] leading-[18px]">中小板指</div>
    </div>
    <div className="mr-[85px] ml-auto h-px w-[215px] bg-[#888]" />
  </footer>
);

/* ---------- overlays ---------- */

const Watermark = () => (
  <svg className="pointer-events-none absolute inset-0 size-full" aria-hidden="true">
    <defs>
      <pattern id="wm" x="187" y="68" width="256" height="28" patternUnits="userSpaceOnUse">
        <text x="0" y="20" fontSize="16" fill="#fff" fillOpacity="0.03" fontFamily="Noto Sans CJK SC, sans-serif">
          分析家公式网
        </text>
        <text x="96" y="20" fontSize="16" fill="#fff" fillOpacity="0.03" fontWeight="700" fontFamily="DejaVu Sans, sans-serif">
          www.70822.Com
        </text>
      </pattern>
    </defs>
    <rect width="100%" height="100%" fill="url(#wm)" />
  </svg>
);

const PETALS = [
  ["#f2b936", 30],
  ["#f4f4f4", 85],
  ["#7ac143", 145],
  ["#e8604c", 208],
  ["#dff0dc", 270],
  ["#4aa3df", 328],
];

const SiteLogo = () => (
  <div className="absolute right-3 bottom-[6px] flex items-center gap-[6px]">
    <svg width="52" height="52" viewBox="-26 -26 52 52">
      {PETALS.map(([color, angle]) => (
        <g key={angle} transform={`rotate(${angle})`}>
          <path d="M0 -2 C-7 -8 -13 -25 0 -25.5 C13 -25 7 -8 0 -2 Z" fill={color} />
          <path d="M0 -6 C-3 -11 -6 -20 0 -21 C6 -20 3 -11 0 -6 Z" fill="#fff" fillOpacity="0.45" />
        </g>
      ))}
      <circle r="3.5" fill="#d9d9d9" />
    </svg>
    <div className="pt-1 whitespace-nowrap">
      <div className="bg-linear-to-b from-[#ffb066] to-[#e8661a] bg-clip-text text-[22px] leading-[26px] font-bold text-transparent">分析家公式网</div>
      <div className="text-[16px] leading-[22px] font-bold text-[#e6d81e] italic">WWW.70822.COM</div>
    </div>
  </div>
);

const App = () => {
  return (
    <div className="flex h-screen w-screen overflow-hidden bg-white pr-2 pb-2 font-['Liberation_Sans','Noto_Sans_CJK_SC',sans-serif]">
      {/* desktop behind the window edge */}
      <div className="flex w-[3px] shrink-0 flex-col border-r border-white">
        <span className="h-12 bg-[#4a4440]" />
        <span className="h-44 bg-[#6f8fb5]" />
        <span className="flex-1 bg-[#f2f2f2]" />
        <span className="h-28 bg-[#c9a27c]" />
        <span className="h-40 bg-[#3a3434]" />
      </div>
      <div className="relative flex min-w-0 flex-1 flex-col border-l border-[#222] bg-black shadow-[2px_2px_5px_rgba(0,0,0,0.8)]">
        <IconDefs />
        <Toolbar />
        <div className="flex min-h-0 flex-1">
          <SideTabs />
          <ChartPanel />
          <QuotePanel />
        </div>
        <StatusBar />
        <Watermark />
        <SiteLogo />
      </div>
    </div>
  );
};

export default App;
